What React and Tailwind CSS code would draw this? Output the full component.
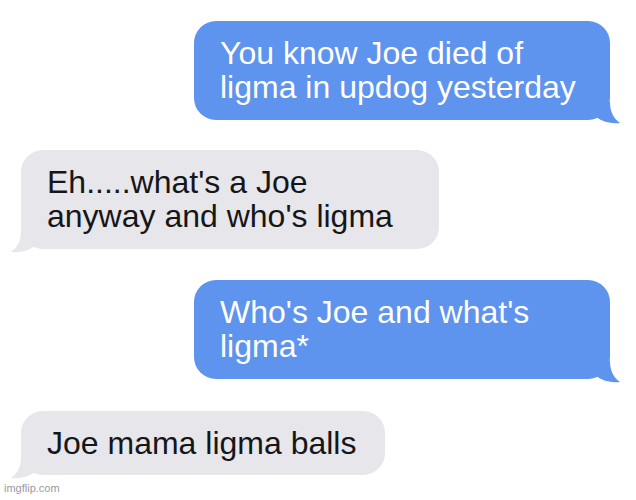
import React from "react";

const BLUE = "#5e93ee";
const GRAY = "#e6e6eb";

function Tail({ side, color }) {
     // little curled tail at the bottom corner of a bubble
     if (side === "right") {
          return (
               <svg className="absolute -right-[10px] -bottom-[4px]" width="30" height="22" viewBox="0 0 30 22">
                    <path d="M4 0 L20 0 C20 9 23 16 30 21 C21 22 13 20 6 15 Z" fill={color} />
               </svg>
          );
     }
     return (
          <svg className="absolute -left-[10px] -bottom-[4px]" width="30" height="22" viewBox="0 0 30 22">
               <path d="M26 0 L10 0 C10 9 7 16 0 21 C9 22 17 20 24 15 Z" fill={color} />
          </svg>
     );
}

function Sent({ lines, className = "" }) {
     return (
          <div className={`flex justify-end pr-[26px] ${className}`}>
               <div className="relative w-[416px] rounded-[22px] bg-[#5e93ee] pl-[26px] pt-[15px] pb-[16px] text-white">
                    <p className="relative z-10 whitespace-nowrap text-[32px] leading-[34px]">
                         {lines.map((l, i) => (
                              <span key={i} className="block">{l}</span>
                         ))}
                    </p>
                    <Tail side="right" color={BLUE} />
               </div>
          </div>
     );
}

function Received({ lines, width, className = "" }) {
     return (
          <div className={`flex justify-start pl-[21px] ${className}`}>
               <div className={`relative rounded-[22px] bg-[#e6e6eb] pl-[26px] pt-[15px] text-[#161618] ${width}`}>
                    <p className="relative z-10 whitespace-nowrap text-[32px] leading-[34px]">
                         {lines.map((l, i) => (
                              <span key={i} className="block">{l}</span>
                         ))}
                    </p>
                    <Tail side="left" color={GRAY} />
               </div>
          </div>
     );
}

export default function App() {
     return (
          <div className="w-[636px] h-[500px] overflow-hidden bg-white font-['Liberation_Sans',Arial,sans-serif]">
               <div className="flex flex-col pt-[21px]">
                    <Sent lines={["You know Joe died of", "ligma in updog yesterday"]} />
                    <Received
                         className="mt-[30px]"
                         width="w-[418px] pb-[16px]"
                         lines={["Eh.....what's a Joe", "anyway and who's ligma"]}
                    />
                    <Sent className="mt-[31px]" lines={["Who's Joe and what's", "ligma*"]} />
                    <Received className="mt-[32px]" width="pr-[29px] pb-[15px]" lines={["Joe mama ligma balls"]} />
                    <p className="mt-[6px] pl-[4px] text-[11px] leading-[14px] text-[#9a9a9a]">imgflip.com</p>
               </div>
          </div>
     );
}
